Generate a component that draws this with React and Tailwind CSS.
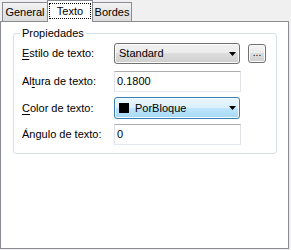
import React from "react";

function Arrow() {
  return (
    <svg width="7" height="4" viewBox="0 0 7 4" className="block">
      <polygon points="0,0 7,0 3.5,4" fill="#000" />
    </svg>
  );
}

export default function App() {
  return (
    <div className="w-[291px] h-[250px] bg-[#f0f0f0] font-['Liberation_Sans',Arial,sans-serif] text-[11px] text-black leading-none">
      <div className="relative z-10 flex items-end h-[21px] pl-[2px]">
        <div className="w-[46px] h-[19px] border border-b-0 border-[#898c95] bg-[linear-gradient(#f4f4f4,#e6e6e6_50%,#dcdcdc)] flex items-center justify-center pt-[1px]">
          General
        </div>
        <div className="-ml-px w-[46px] h-[22px] -mb-px border border-b-0 border-[#898c95] bg-white flex items-start justify-center pt-[2px]">
          <span className="border border-dotted border-black w-[42px] h-[16px] flex items-center justify-center">
            Texto
          </span>
        </div>
        <div className="-ml-px w-[40px] h-[19px] border border-b-0 border-[#898c95] bg-[linear-gradient(#f4f4f4,#e6e6e6_50%,#dcdcdc)] flex items-center justify-center pt-[1px]">
          Bordes
        </div>
      </div>
      <div className="w-[289px] h-[228px] border border-[#898c95] bg-white pt-[11px] pl-[12px]">
        <div className="relative w-[264px] h-[121px] border border-[#d5dfe5] rounded-[3px] pl-[8px] pt-[9px]">
          <span className="absolute left-[6px] top-[-7px] bg-white px-[2px] leading-[13px]">
            Propiedades
          </span>
          <div className="flex items-center h-[21px]">
            <span className="w-[92px]">
              <span className="underline underline-offset-2">E</span>stilo de texto:
            </span>
            <div className="w-[126px] h-[21px] border border-[#707070] rounded-[3px] bg-[linear-gradient(#f2f2f2,#ebebeb_50%,#dddddd_50%,#cfcfcf)] shadow-[inset_0_0_0_1px_#fbfbfb] flex items-center pl-[4px] pr-[3px]">
              <span className="flex-1">Standard</span>
              <Arrow />
            </div>
            <div className="ml-[8px] w-[18px] h-[19px] border border-[#707070] rounded-[3px] bg-[linear-gradient(#f2f2f2,#ebebeb_50%,#dddddd_50%,#cfcfcf)] shadow-[inset_0_0_0_1px_#fbfbfb] flex items-end justify-center pb-[4px] text-[10px]">
              ...
            </div>
          </div>
          <div className="flex items-center h-[21px] mt-[7px]">
            <span className="w-[92px]">
              Al<span className="underline underline-offset-2">t</span>ura de texto:
            </span>
            <div className="w-[127px] h-[21px] border border-[#e2e3ea] border-t-[#abadb3] border-b-[#e3e9ef] bg-white flex items-center pl-[2px]">
              0.1800
            </div>
          </div>
          <div className="flex items-center h-[22px] mt-[5px]">
            <span className="w-[92px]">
              <span className="underline underline-offset-2">C</span>olor de texto:
            </span>
            <div className="w-[126px] h-[22px] border border-[#3c7fb1] rounded-[3px] bg-[linear-gradient(#eaf6fd,#d9f0fc_50%,#bee6fd_50%,#a7d9f5)] shadow-[inset_0_0_0_1px_#f4fbfe] flex items-center pl-[4px] pr-[3px]">
              <span className="w-[10px] h-[10px] bg-black mr-[6px]" />
              <span className="flex-1">PorBloque</span>
              <Arrow />
            </div>
          </div>
          <div className="flex items-center h-[21px] mt-[5px]">
            <span className="w-[92px]">Ángulo de texto:</span>
            <div className="w-[127px] h-[21px] border border-[#e2e3ea] border-t-[#abadb3] border-b-[#e3e9ef] bg-white flex items-center pl-[2px]">
              0
            </div>
          </div>
        </div>
      </div>
    </div>
  );
}
